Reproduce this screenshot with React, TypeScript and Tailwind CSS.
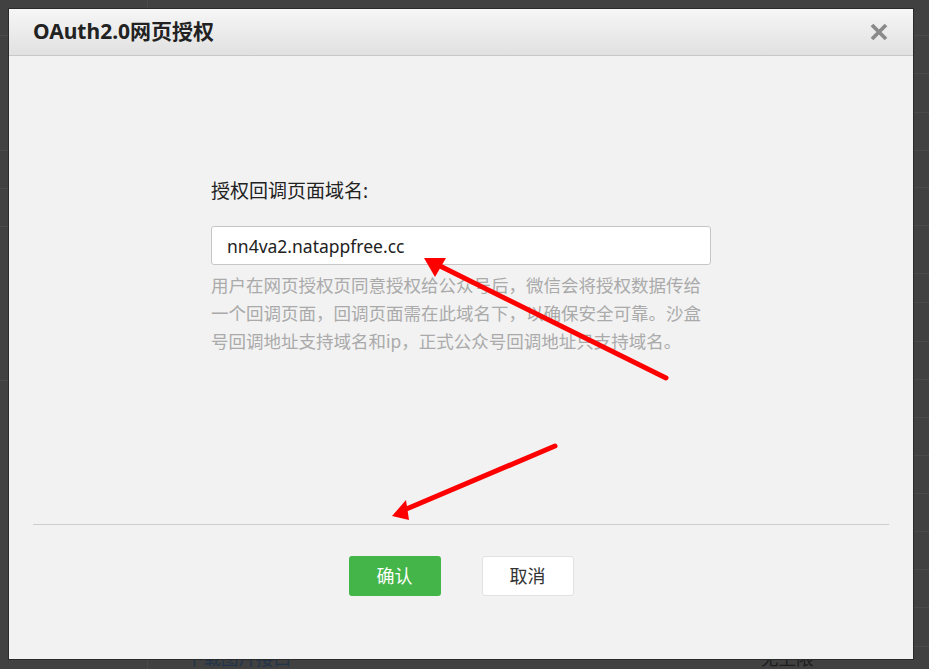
const rightRows = [36, 38, 39, 38, 38, 38, 48, 29, 39, 38, 38, 38, 38, 39, 38, 38, 39];
const leftRows = [36, 115, 38, 38, 154];

const help =
  "用户在网页授权页同意授权给公众号后，微信会将授权数据传给一个回调页面，回调页面需在此域名下，以确保安全可靠。沙盒号回调地址支持域名和ip，正式公众号回调地址只支持域名。";

const CloseIcon = () => (
  <svg width="20" height="20" viewBox="0 0 20 20" className="block">
    <path d="M3 3 L17 17 M17 3 L3 17" stroke="#8a8a8a" strokeWidth="3.8" fill="none" />
  </svg>
);

const Arrows = () => (
  <svg
    className="pointer-events-none absolute left-0 top-0"
    width="929"
    height="669"
    viewBox="0 0 929 669"
  >
    <line x1="666" y1="378" x2="438" y2="265" stroke="#ff0000" strokeWidth="5" strokeLinecap="round" />
    <polygon points="424,258 446,258 435,277" fill="#ff0000" />
    <line x1="555" y1="446" x2="404" y2="510" stroke="#ff0000" strokeWidth="5" strokeLinecap="round" />
    <polygon points="392,516 406,500 409,520" fill="#ff0000" />
  </svg>
);

export default function App() {
  return (
    <div className="relative h-[669px] w-full overflow-hidden bg-[#414141] font-['Noto_Sans','Noto_Sans_CJK_SC',sans-serif]">
      {/* page behind the overlay */}
      <div className="flex h-full">
        <div className="flex w-[148px] flex-col border-r border-[#4a4a4a]">
          {leftRows.map((h, i) => (
            <div key={i} className="border-b border-[#4b4b4b]" style={{ height: h }} />
          ))}
        </div>
        <div className="flex flex-1 flex-col">
          {rightRows.map((h, i) => (
            <div key={i} className="border-b border-[#4b4b4b]" style={{ height: h }} />
          ))}
          <div className="flex text-[17.5px] leading-[22px]">
            <span className="ml-[38px] text-[#22344a]">下载图片接口</span>
            <span className="ml-[470px] text-[#1c1c1c]">无上限</span>
          </div>
        </div>
      </div>

      {/* dialog */}
      <div className="absolute left-[8px] top-[8px] flex h-[652px] w-[906px] flex-col border border-[#2a2a2a] bg-[#f2f2f2]">
        <div className="flex h-[47px] items-center justify-between border-b border-[#c8c8c8] bg-gradient-to-b from-[#f6f6f6] to-[#e1e1e1] pl-[24px] pr-[24px]">
          <span className="text-[21px] font-bold text-[#222]">OAuth2.0网页授权</span>
          <CloseIcon />
        </div>

        <div className="h-[468px] pt-[121px]">
          <div className="mx-auto w-[500px]">
            <div className="text-[19px] leading-[28px] text-[#222]">授权回调页面域名:</div>
            <input
              readOnly
              defaultValue="nn4va2.natappfree.cc"
              className="mt-[21px] block h-[39px] w-[500px] rounded-[3px] border border-[#c6c6c6] bg-white px-[15px] text-[17.5px] text-[#222] outline-none"
            />
            <p className="mt-[6px] text-[17.5px] leading-[28px] text-[#aaaaaa]">{help}</p>
          </div>
        </div>

        <div className="mx-[24px] h-px bg-[#cdcdcd]" />

        <div className="flex justify-center gap-[41px] pt-[31px]">
          <button className="h-[40px] w-[92px] rounded-[3px] bg-[#44b549] text-[18px] text-white">确认</button>
          <button className="h-[40px] w-[92px] rounded-[3px] border border-[#e2e2e2] bg-white text-[18px] text-[#333]">
            取消
          </button>
        </div>
      </div>

      <Arrows />
    </div>
  );
}
